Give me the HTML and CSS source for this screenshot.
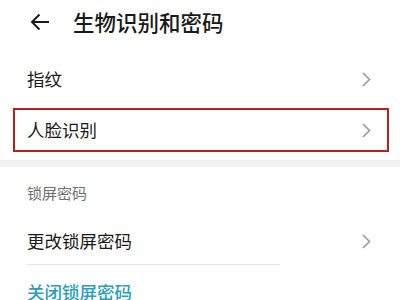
FILE: index.html
```html
<!DOCTYPE html>
<html lang="zh-CN">
<head>
<meta charset="utf-8">
<link rel="stylesheet" href="styles.css">
</head>
<body>
<div class="screen">
  <header class="topbar">
    <svg class="back" width="20" height="18" viewBox="0 0 20 18"><path d="M19 9H2M9.5 1.5L2 9l7.5 7.5" fill="none" stroke="#1a1a1a" stroke-width="2"/></svg>
    <h1 class="title">生物识别和密码</h1>
  </header>
  <section class="group first">
    <div class="row"><span class="label">指纹</span><svg class="chev" width="9" height="15" viewBox="0 0 9 15"><path d="M1 1l6.5 6.5L1 14" fill="none" stroke="#9a9a9a" stroke-width="1.6"/></svg></div>
    <div class="row highlight"><span class="label">人脸识别</span><svg class="chev" width="9" height="15" viewBox="0 0 9 15"><path d="M1 1l6.5 6.5L1 14" fill="none" stroke="#9a9a9a" stroke-width="1.6"/></svg></div>
  </section>
  <div class="band"></div>
  <section class="group">
    <div class="section-title">锁屏密码</div>
    <div class="row change-row"><span class="label">更改锁屏密码</span><svg class="chev" width="9" height="15" viewBox="0 0 9 15"><path d="M1 1l6.5 6.5L1 14" fill="none" stroke="#9a9a9a" stroke-width="1.6"/></svg></div>
    <div class="divider"></div>
    <div class="row link-row"><span class="label link">关闭锁屏密码</span></div>
  </section>
</div>
</body>
</html>
```
FILE: styles.css
```css
html, body {
  margin: 0;
  padding: 0;
  background: #ffffff;
}
body {
  font-family: "Noto Sans CJK SC", "Noto Sans", sans-serif;
  color: #1a1a1a;
}
.screen {
  width: 400px;
  height: 300px;
  overflow: hidden;
}
.topbar {
  height: 44px;
  display: flex;
  align-items: center;
  padding-left: 30px;
}
.back {
  display: block;
}
.title {
  margin: 0 0 0 23px;
  font-size: 21.5px;
  font-weight: 500;
  line-height: 1;
}
.group.first {
  padding-top: 9px;
}
.row {
  height: 52px;
  display: flex;
  align-items: center;
  justify-content: space-between;
  padding: 0 29px 0 27px;
}
.label {
  font-size: 17.5px;
  line-height: 1;
}
.chev {
  display: block;
}
.row.highlight {
  height: 40px;
  margin: 3px 11px 0 13px;
  border: 2px solid #b8201e;
  padding: 0 16px 0 12px;
}
.band {
  height: 7px;
  margin-top: 8px;
  background: #f2f2f2;
}
.section-title {
  height: 51px;
  display: flex;
  align-items: center;
  padding-left: 27px;
  font-size: 15px;
  color: #6f6f6f;
}
.row.change-row {
  height: 46px;
}
.divider {
  height: 1px;
  margin: 0 120px 0 27px;
  background: #e6e6e6;
}
.row.link-row {
  height: 54px;
}
.link {
  color: #2e9db6;
  font-weight: 500;
}
```
